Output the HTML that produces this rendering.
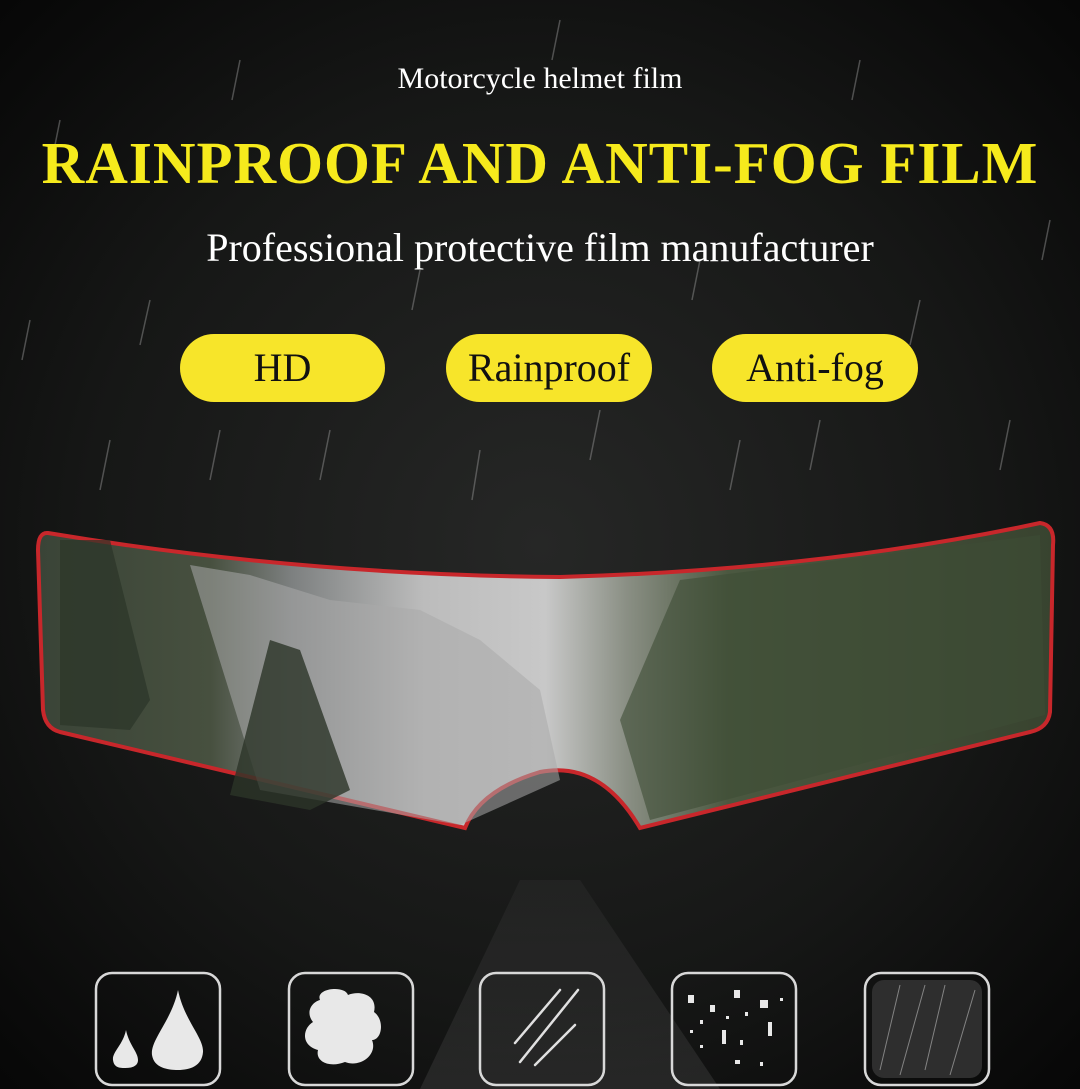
<!DOCTYPE html>
<html><head><meta charset="utf-8"><style>
html,body{margin:0;padding:0;background:#111;}
.wrap{position:relative;width:1080px;height:1089px;overflow:hidden;font-family:"Liberation Serif",serif;}
svg{position:absolute;left:0;top:0}
.t{position:absolute;left:0;width:1080px;text-align:center;white-space:nowrap;}
.pill{position:absolute;top:334px;height:68px;background:#f7e52a;border-radius:34px;color:#111;font-size:40px;line-height:68px;text-align:center;}
</style></head><body><div class="wrap">
<svg width="1080" height="1089" viewBox="0 0 1080 1089">
<defs>
<radialGradient id="bg" cx="0.5" cy="0.5" r="0.7">
<stop offset="0" stop-color="#262726"/><stop offset="0.6" stop-color="#161716"/><stop offset="1" stop-color="#070707"/>
</radialGradient>
<linearGradient id="vis" x1="0" x2="1" y1="0" y2="0">
<stop offset="0" stop-color="#3a4437"/><stop offset="0.17" stop-color="#47503f"/><stop offset="0.25" stop-color="#7d8080"/>
<stop offset="0.38" stop-color="#bcbcbc"/><stop offset="0.5" stop-color="#c8c8c8"/><stop offset="0.58" stop-color="#8a8f84"/>
<stop offset="0.68" stop-color="#4b5840"/><stop offset="1" stop-color="#38432f"/>
</linearGradient>
<linearGradient id="road" x1="0" x2="0" y1="0" y2="1"><stop offset="0" stop-color="#2a2a2a"/><stop offset="1" stop-color="#3a3a3a"/></linearGradient>
</defs>
<rect width="1080" height="1089" fill="url(#bg)"/>
<polygon points="420,1089 520,880 580,880 720,1089" fill="url(#road)" opacity="0.5"/>
<g stroke="#9a9a9a" stroke-width="1.5" opacity="0.45">
<line x1="60" y1="120" x2="52" y2="160"/><line x1="150" y1="300" x2="140" y2="345"/><line x1="240" y1="60" x2="232" y2="100"/>
<line x1="330" y1="430" x2="320" y2="480"/><line x1="420" y1="270" x2="412" y2="310"/><line x1="600" y1="410" x2="590" y2="460"/>
<line x1="700" y1="260" x2="692" y2="300"/><line x1="820" y1="420" x2="810" y2="470"/><line x1="920" y1="300" x2="910" y2="345"/>
<line x1="1010" y1="420" x2="1000" y2="470"/><line x1="110" y1="440" x2="100" y2="490"/><line x1="480" y1="450" x2="472" y2="500"/>
<line x1="860" y1="60" x2="852" y2="100"/><line x1="30" y1="320" x2="22" y2="360"/><line x1="1050" y1="220" x2="1042" y2="260"/>
<line x1="220" y1="430" x2="210" y2="480"/><line x1="740" y1="440" x2="730" y2="490"/><line x1="560" y1="20" x2="552" y2="60"/>
</g>
<path d="M48,533 Q300,575 560,577 Q820,570 1040,523 Q1055,525 1053,545 L1050,712 Q1048,728 1030,732 L640,828 Q600,760 540,772 Q480,790 465,828 L60,732 Q45,728 43,710 L38,550 Q38,532 48,533 Z" fill="url(#vis)" stroke="#c8272b" stroke-width="4"/>
<path d="M190,565 L250,575 L330,600 L420,610 L480,640 L540,690 L560,780 L460,825 L260,790 Z" fill="#a9a9a9" opacity="0.55"/>
<polygon points="60,540 110,540 150,700 130,730 60,725" fill="#2b3428" opacity="0.7"/>
<polygon points="270,640 300,650 350,790 310,810 230,795" fill="#2c3528" opacity="0.8"/>
<polygon points="680,580 1040,535 1045,715 650,820 620,720" fill="#3e4c35" opacity="0.6"/>
<g fill="none" stroke="#d8d8d8" stroke-width="2.5">
<rect x="96" y="973" width="124" height="112" rx="16"/><rect x="289" y="973" width="124" height="112" rx="16"/>
<rect x="480" y="973" width="124" height="112" rx="16"/><rect x="672" y="973" width="124" height="112" rx="16"/>
<rect x="865" y="973" width="124" height="112" rx="16"/>
</g>
<g fill="#e8e8e8">
<path d="M178,990 C172,1020 150,1040 152,1055 C154,1068 168,1070 178,1070 C190,1070 202,1066 203,1052 C204,1038 184,1020 178,990 Z"/>
<path d="M126,1030 C123,1045 112,1052 113,1060 C114,1068 120,1068 126,1068 C132,1068 138,1066 138,1060 C138,1052 129,1045 126,1030 Z"/>
<path d="M320,1000 C315,988 345,985 348,995 C360,990 378,995 374,1012 C385,1020 382,1040 372,1040 C378,1055 360,1068 345,1062 C330,1068 315,1062 318,1050 C300,1045 303,1028 313,1022 C305,1012 312,1002 320,1000 Z"/>
</g>
<g stroke="#e0e0e0" stroke-width="2.5" stroke-linecap="round">
<line x1="560" y1="990" x2="515" y2="1043"/><line x1="578" y1="990" x2="520" y2="1062"/><line x1="575" y1="1025" x2="535" y2="1065"/>
</g>
<g fill="#e8e8e8">
<rect x="688" y="995" width="6" height="8"/><rect x="734" y="990" width="6" height="8"/><rect x="760" y="1000" width="8" height="8"/>
<rect x="710" y="1005" width="5" height="7"/><rect x="722" y="1030" width="4" height="14"/><rect x="768" y="1022" width="4" height="14"/>
<rect x="745" y="1012" width="3" height="4"/><rect x="700" y="1020" width="3" height="4"/><rect x="740" y="1040" width="3" height="5"/>
<rect x="735" y="1060" width="5" height="4"/><rect x="700" y="1045" width="3" height="3"/><rect x="760" y="1062" width="3" height="4"/>
<rect x="780" y="998" width="3" height="3"/><rect x="726" y="1016" width="3" height="3"/><rect x="690" y="1030" width="3" height="3"/>
</g>
<rect x="872" y="980" width="110" height="98" rx="12" fill="#2e2e2e"/>
<g stroke="#999" stroke-width="1" opacity="0.8">
<line x1="880" y1="1070" x2="900" y2="985"/><line x1="900" y1="1075" x2="925" y2="985"/><line x1="925" y1="1070" x2="945" y2="985"/><line x1="950" y1="1075" x2="975" y2="990"/>
</g>
</svg>
<div class="t" style="top:62px;color:#fff;font-size:30px;">Motorcycle helmet film</div>
<div class="t" style="top:129px;color:#f6ea1c;font-size:59px;font-weight:bold;letter-spacing:1px;">RAINPROOF AND ANTI-FOG FILM</div>
<div class="t" style="top:224px;color:#fff;font-size:40px;">Professional protective film manufacturer</div>
<div class="pill" style="left:180px;width:205px;">HD</div>
<div class="pill" style="left:446px;width:206px;">Rainproof</div>
<div class="pill" style="left:712px;width:206px;">Anti-fog</div>
</div></body></html>
